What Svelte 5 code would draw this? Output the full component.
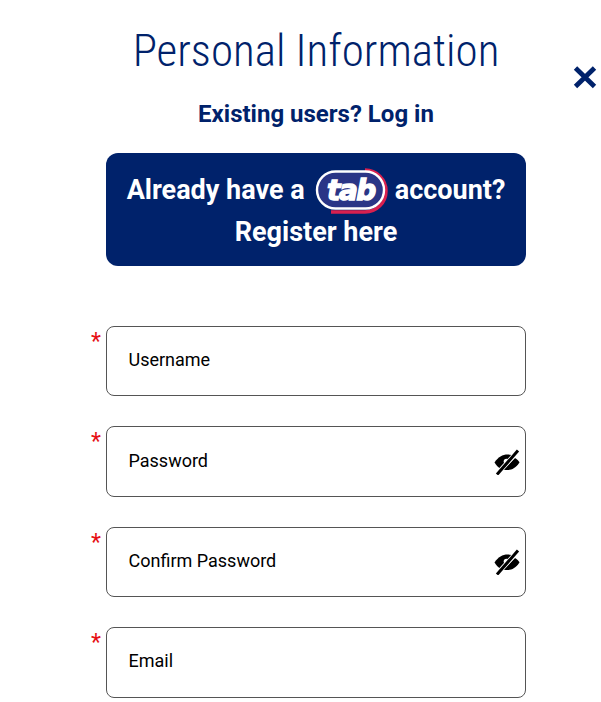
<script>
  const fields = [
    { label: 'Username', eye: false },
    { label: 'Password', eye: true },
    { label: 'Confirm Password', eye: true },
    { label: 'Email', eye: false }
  ];
</script>

<main class="page">
  <button class="close" aria-label="Close">
    <svg viewBox="0 0 24 24" width="24" height="24"><path d="M2.5 3 L21.5 21.5 M21.5 3 L2.5 21.5" fill="none" stroke="#00226b" stroke-width="4.8"/></svg>
  </button>
  <div class="column">
    <h1>Personal Information</h1>
    <p class="login">Existing users? Log in</p>
    <div class="banner">
      <div class="line">
        <span>Already have a</span>
        <svg class="logo" viewBox="0 0 76 48" width="76" height="48">
          <path d="M53 4 A21 21 0 0 1 53 46 L19 46" fill="none" stroke="#d8204f" stroke-width="3.5"/>
          <rect x="5" y="5.5" width="67" height="37" rx="18.5" fill="#2a3586" stroke="#fff" stroke-width="2.4"/>
          <text x="39" y="34" class="logotext">tab</text>
        </svg>
        <span>account?</span>
      </div>
      <div class="line">Register here</div>
    </div>
    <div class="fields">
      {#each fields as f}
        <div class="field">
          <span class="star">*</span>
          <div class="box">
            <span>{f.label}</span>
            {#if f.eye}
              <svg class="eye" viewBox="0 0 26 26" width="26" height="26">
                <path d="M0.5 13.5 C5 6.5 11 4.5 17.5 6 L6 19.5 C4 18 2 16 0.5 13.5 Z" fill="#000"/>
                <path d="M9.5 20.5 L21 9 C23 10.2 24.6 11.8 25.5 13.5 C21 20.5 15 22 9.5 20.5 Z" fill="#000"/>
                <circle cx="12.5" cy="12.5" r="2.8" fill="#fff"/>
                <path d="M3 25 L24 2" stroke="#fff" stroke-width="4.8"/>
                <path d="M3 25.5 L24 1.5" stroke="#000" stroke-width="3"/>
              </svg>
            {/if}
          </div>
        </div>
      {/each}
    </div>
  </div>
</main>

<style>
  :global(body) {
    margin: 0;
    background: #fff;
    overflow: hidden;
  }
  .page {
    position: relative;
    width: 601px;
    height: 702px;
    overflow: hidden;
    font-family: Roboto, "Liberation Sans", sans-serif;
  }
  .close {
    position: absolute;
    left: 573px;
    top: 65px;
    width: 24px;
    height: 24px;
    padding: 0;
    border: 0;
    background: none;
  }
  .close svg { display: block; }
  .column {
    width: 420px;
    margin-left: 106px;
    display: flex;
    flex-direction: column;
  }
  h1 {
    margin: 25px 0 0;
    height: 52px;
    line-height: 52px;
    font-size: 45px;
    font-weight: 300;
    font-stretch: condensed;
    color: #00226b;
    text-align: center;
    white-space: nowrap;
  }
  .login {
    margin: 24px 0 0;
    height: 26px;
    line-height: 26px;
    font-size: 24px;
    font-weight: 700;
    color: #00226b;
    text-align: center;
  }
  .banner {
    margin-top: 26px;
    height: 113px;
    box-sizing: border-box;
    padding-top: 16px;
    background: #00226b;
    border-radius: 12px;
    color: #fff;
    font-size: 27px;
    font-weight: 700;
    display: flex;
    flex-direction: column;
    align-items: center;
  }
  .line {
    display: flex;
    align-items: center;
    justify-content: center;
    gap: 7px;
    height: 42px;
    white-space: nowrap;
  }
  .logo { flex: none; margin: -4px 0; }
  .logotext {
    font-family: "DejaVu Sans", sans-serif;
    font-size: 28px;
    font-weight: 700;
    font-style: italic;
    fill: #fff;
    stroke: #fff;
    stroke-width: 1.4;
    text-anchor: middle;
    letter-spacing: -1.5px;
  }
  .fields {
    margin-top: 60px;
    display: flex;
    flex-direction: column;
    gap: 30px;
  }
  .field { position: relative; }
  .star {
    position: absolute;
    left: -15px;
    top: 2px;
    color: #e60f14;
    font-size: 23px;
    line-height: 28px;
  }
  .box {
    height: 70.4px;
    box-sizing: border-box;
    border: 1px solid #555;
    border-radius: 8px;
    padding: 0 5px 3px 21.5px;
    display: flex;
    align-items: center;
    justify-content: space-between;
    font-size: 18px;
    color: #000;
  }
  .eye { margin-top: 3px; }
</style>
